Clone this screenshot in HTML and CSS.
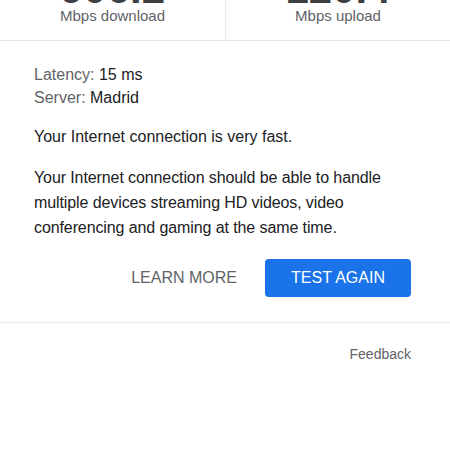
FILE: index.html
```html
<!DOCTYPE html>
<html>
<head>
<meta charset="utf-8">
<link rel="stylesheet" href="styles.css">
</head>
<body>
<div class="page">
  <div class="stats">
    <div class="stat">
      <div class="num">906.2</div>
      <div class="unit">Mbps download</div>
    </div>
    <div class="stat">
      <div class="num">120.4</div>
      <div class="unit">Mbps upload</div>
    </div>
  </div>
  <div class="details">
    <div class="meta">
      <div><span class="label">Latency:</span> 15 ms</div>
      <div><span class="label">Server:</span> Madrid</div>
    </div>
    <p class="summary">Your Internet connection is very fast.</p>
    <p class="desc">Your Internet connection should be able to handle multiple devices streaming HD videos, video conferencing and gaming at the same time.</p>
  </div>
  <div class="actions">
    <span class="learn">LEARN MORE</span>
    <span class="test">TEST AGAIN</span>
  </div>
  <div class="footer">
    <span class="feedback">Feedback</span>
  </div>
</div>
</body>
</html>
```
FILE: styles.css
```css
html, body {
  margin: 0;
  padding: 0;
  background: #fff;
}
body {
  font-family: "Liberation Sans", Arial, sans-serif;
  color: #202124;
  width: 450px;
  overflow: hidden;
}
.page {
  margin-top: -30px;
}
.stats {
  display: grid;
  grid-template-columns: 226px 1fr;
  border-bottom: 1px solid #e6e6e6;
}
.stat {
  text-align: center;
  padding-bottom: 15px;
}
.stat:first-child {
  border-right: 1px solid #ececec;
}
.num {
  font-size: 42px;
  font-weight: bold;
  line-height: 37px;
  color: #3c4043;
}
.unit {
  font-size: 15px;
  line-height: 18px;
  color: #5f6368;
}
.details {
  padding: 22px 34px 0;
  font-size: 16px;
}
.meta {
  line-height: 23px;
  color: #202124;
}
.label {
  color: #5f6368;
}
.summary {
  margin: 15px 0 0;
  line-height: 25px;
}
.desc {
  margin: 16px 0 0;
  line-height: 25px;
  letter-spacing: -0.1px;
}
.actions {
  display: flex;
  justify-content: flex-end;
  align-items: center;
  gap: 28px;
  padding: 19px 39px 25px 0;
  border-bottom: 1px solid #ececec;
}
.learn {
  font-size: 16px;
  color: #5f6368;
}
.test {
  display: block;
  width: 146px;
  height: 38px;
  line-height: 38px;
  text-align: center;
  box-sizing: border-box;
  background: #1a73e8;
  color: #fff;
  font-size: 16px;
  border-radius: 4px;
}
.footer {
  display: flex;
  justify-content: flex-end;
  padding: 23px 39px 0 0;
}
.feedback {
  font-size: 14px;
  line-height: 16px;
  color: #5f6368;
}
```
